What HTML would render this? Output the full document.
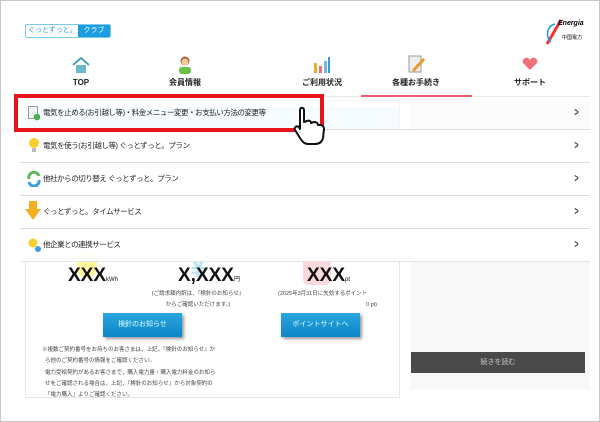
<!DOCTYPE html>
<html><head><meta charset="utf-8"><style>
*{margin:0;padding:0;box-sizing:border-box}
body{width:600px;height:422px;overflow:hidden;background:#fff;font-family:"Liberation Sans","Noto Sans CJK JP",sans-serif;position:relative}
.a{position:absolute}
.frame{left:0;top:0;width:600px;height:422px;border:1px solid #c8c8c8}
.nav{font-size:8px;line-height:10px;font-weight:bold;color:#222;text-align:center;width:110px;top:78px}
.row{left:20px;width:570px;height:33px;border-bottom:1px solid #ddd;background:rgba(255,255,255,.95);font-size:7.5px;line-height:10px;color:#222}
.row span{position:absolute;left:23px;top:11px;letter-spacing:-0.45px}
.row i{position:absolute;right:10px;top:9px;font-style:normal;font-size:12px;line-height:12px;font-weight:bold;color:#444;transform:scaleX(.6)}
.xxx{font-size:19px;font-weight:bold;color:#111;top:265px;line-height:22px}
.xxx small{font-size:6px;font-weight:normal}
.sm{font-size:5.5px;color:#444;line-height:11px;white-space:nowrap}
.btn{background:linear-gradient(#2aa6e0,#0c86c6);color:#dff;font-size:7px;text-align:center;line-height:24px;height:24px;width:79px;box-shadow:2px 2px 3px #999}
</style></head><body>
<div class="a frame"></div>
<div class="a" style="left:25px;top:24px;width:86px;height:14px;border:1px solid #7cc8ec;border-radius:2px;font-size:7px;line-height:12px;overflow:hidden">
<span style="color:#28a0dc;padding-left:2px">ぐっとずっと。</span><span style="position:absolute;right:0;top:0;width:32px;height:12px;background:#1a9ee0;color:#fff;text-align:center">クラブ</span></div>
<svg class="a" style="left:543px;top:18px" width="22" height="30"><path d="M18 2 L4 26" stroke="#e33" stroke-width="3"/><path d="M12 6 C4 8 2 18 8 24" stroke="#29d" stroke-width="1.5" fill="none"/></svg>
<div class="a" style="left:558px;top:20px;font-size:7px;font-weight:bold;font-style:italic">Energia</div>
<div class="a" style="left:562px;top:34px;font-size:5px">中国電力</div>
<svg class="a" style="left:72px;top:57px" width="18" height="16"><path d="M1 8 L9 1 L17 8" stroke="#4aa0c0" stroke-width="2" fill="none"/><rect x="4" y="8" width="10" height="8" fill="#6cb8cc"/></svg>
<svg class="a" style="left:178px;top:56px" width="14" height="18"><circle cx="7" cy="5" r="4.5" fill="#a0663a"/><circle cx="7" cy="6" r="3.5" fill="#f3c79a"/><rect x="1" y="11" width="12" height="7" rx="3" fill="#6cc04a"/></svg>
<svg class="a" style="left:313px;top:56px" width="18" height="17"><rect x="1" y="7" width="3" height="10" fill="#e8b020"/><rect x="6" y="10" width="3" height="7" fill="#ee7070"/><rect x="11" y="5" width="3" height="12" fill="#70b8e0"/><rect x="15" y="1" width="2" height="16" fill="#3a9ad0"/></svg>
<svg class="a" style="left:408px;top:55px" width="18" height="20"><rect x="1" y="1" width="12" height="16" fill="#eee" stroke="#999"/><path d="M5 16 L16 4" stroke="#e89a30" stroke-width="3"/></svg>
<svg class="a" style="left:522px;top:57px" width="16" height="14"><path d="M8 13 L1 6 A3.5 3.5 0 0 1 8 3 A3.5 3.5 0 0 1 15 6 Z" fill="#ee7078"/></svg>
<div class="a nav" style="left:26px">TOP</div>
<div class="a nav" style="left:130px">会員情報</div>
<div class="a nav" style="left:267px">ご利用状況</div>
<div class="a nav" style="left:361px">各種お手続き</div>
<div class="a nav" style="left:475px">サポート</div>
<div class="a" style="left:20px;top:96px;width:570px;height:1px;background:#e8e8e8"></div>
<div class="a" style="left:361px;top:95px;width:111px;height:2px;background:#ee5a6a"></div>
<div class="a" style="left:25px;top:100px;width:375px;height:298px;border:1px solid #e6e6e6;background:#fff"></div>
<div class="a" style="left:410px;top:100px;width:180px;height:290px;background:#f8f8f8"></div>
<div class="a" style="left:25px;top:107px;width:374px;height:23px;background:#e6f6fd"></div>
<div class="a" style="left:77px;top:252px;width:20px;height:26px;border-radius:10px;background:#fff6a0"></div>
<div class="a" style="left:190px;top:252px;font-size:30px;line-height:32px;color:#bde4f4;font-weight:bold">¥</div>
<div class="a" style="left:303px;top:255px;width:28px;height:30px;border-radius:6px;background:#fbd8dc"></div>
<div class="a xxx" style="left:68px">XXX<small>kWh</small></div>
<div class="a xxx" style="left:178px">X,XXX<small>円</small></div>
<div class="a xxx" style="left:307px">XXX<small>pt</small></div>
<div class="a sm" style="left:148px;top:289px;text-align:center;width:100px">(ご請求額内訳は、『検針のお知らせ』<br>からご確認いただけます。)</div>
<div class="a sm" style="left:278px;top:289px;width:105px">(2025年3月31日に失効するポイント<br><span style="padding-left:88px">0 pt)</span></div>
<div class="a btn" style="left:103px;top:313px">検針のお知らせ</div>
<div class="a btn" style="left:281px;top:313px">ポイントサイトへ</div>
<div class="a sm" style="left:42px;top:345px;line-height:11.3px">※複数ご契約番号をお持ちのお客さまは，上記，『検針のお知らせ』か<br>&nbsp;&nbsp;ら他のご契約番号の情報をご確認ください。<br>&nbsp;&nbsp;電力受給契約があるお客さまで，購入電力量・購入電力料金のお知ら<br>&nbsp;&nbsp;せをご確認される場合は，上記，『検針のお知らせ』から対象契約の<br>&nbsp;&nbsp;「電力購入」よりご確認ください。</div>
<div class="a" style="left:411px;top:352px;width:174px;height:21px;background:#4a4a4a;color:#ccc;font-size:7px;text-align:center;line-height:21px">続きを読む</div>
<div class="a row" style="top:97px;background:rgba(255,255,255,.6)"><svg class="a" style="left:8px;top:9px" width="12" height="15"><rect x="0.5" y="0.5" width="9" height="12" fill="#f4f4f4" stroke="#999"/><circle cx="9" cy="11" r="3.3" fill="#4caf50"/></svg><span>電気を止める(お引越し等)・料金メニュー変更・お支払い方法の変更等</span><i>&gt;</i></div>
<div class="a row" style="top:130px"><svg class="a" style="left:8px;top:7px" width="12" height="18"><circle cx="6" cy="6" r="5" fill="#f6d030"/><rect x="4" y="11" width="4" height="4" fill="#bbb"/></svg><span>電気を使う(お引越し等) ぐっとずっと。プラン</span><i>&gt;</i></div>
<div class="a row" style="top:163px"><svg class="a" style="left:6px;top:8px" width="16" height="16"><path d="M3 8 A5 5 0 0 1 13 5" stroke="#5cb85c" stroke-width="3" fill="none"/><path d="M13 9 A5 5 0 0 1 3 11" stroke="#3aa0e0" stroke-width="3" fill="none"/></svg><span>他社からの切り替え ぐっとずっと。プラン</span><i>&gt;</i></div>
<div class="a row" style="top:196px"><svg class="a" style="left:4px;top:4px" width="18" height="22"><path d="M5 1 H13 V9 H17 L9 20 L1 9 H5 Z" fill="#f4b020"/></svg><span>ぐっとずっと。タイムサービス</span><i>&gt;</i></div>
<div class="a row" style="top:229px;border-bottom:1px solid #e4e4e4"><svg class="a" style="left:6px;top:7px" width="16" height="18"><circle cx="7" cy="7" r="4.5" fill="#f6d030"/><circle cx="12" cy="13" r="3" fill="#3aa0e0"/></svg><span>他企業との連携サービス</span><i>&gt;</i></div>
<div class="a" style="left:14px;top:94px;width:310px;height:38px;border:4px solid #e8141c"></div>
<svg class="a" style="left:292px;top:106px" width="36" height="40"><path d="M8 4 C8 1 12 1 12 4 L12 16 L15 15 C17 14 19 15 19 17 L22 16 C24 16 26 17 26 19 L28 19 C31 19 32 21 32 23 L31 32 C30 36 27 38 23 38 L16 38 C12 38 10 35 8 32 L3 24 C2 22 4 19 7 21 L8 23 Z" fill="#fff" stroke="#111" stroke-width="2" stroke-linejoin="round"/></svg>
</body></html>
